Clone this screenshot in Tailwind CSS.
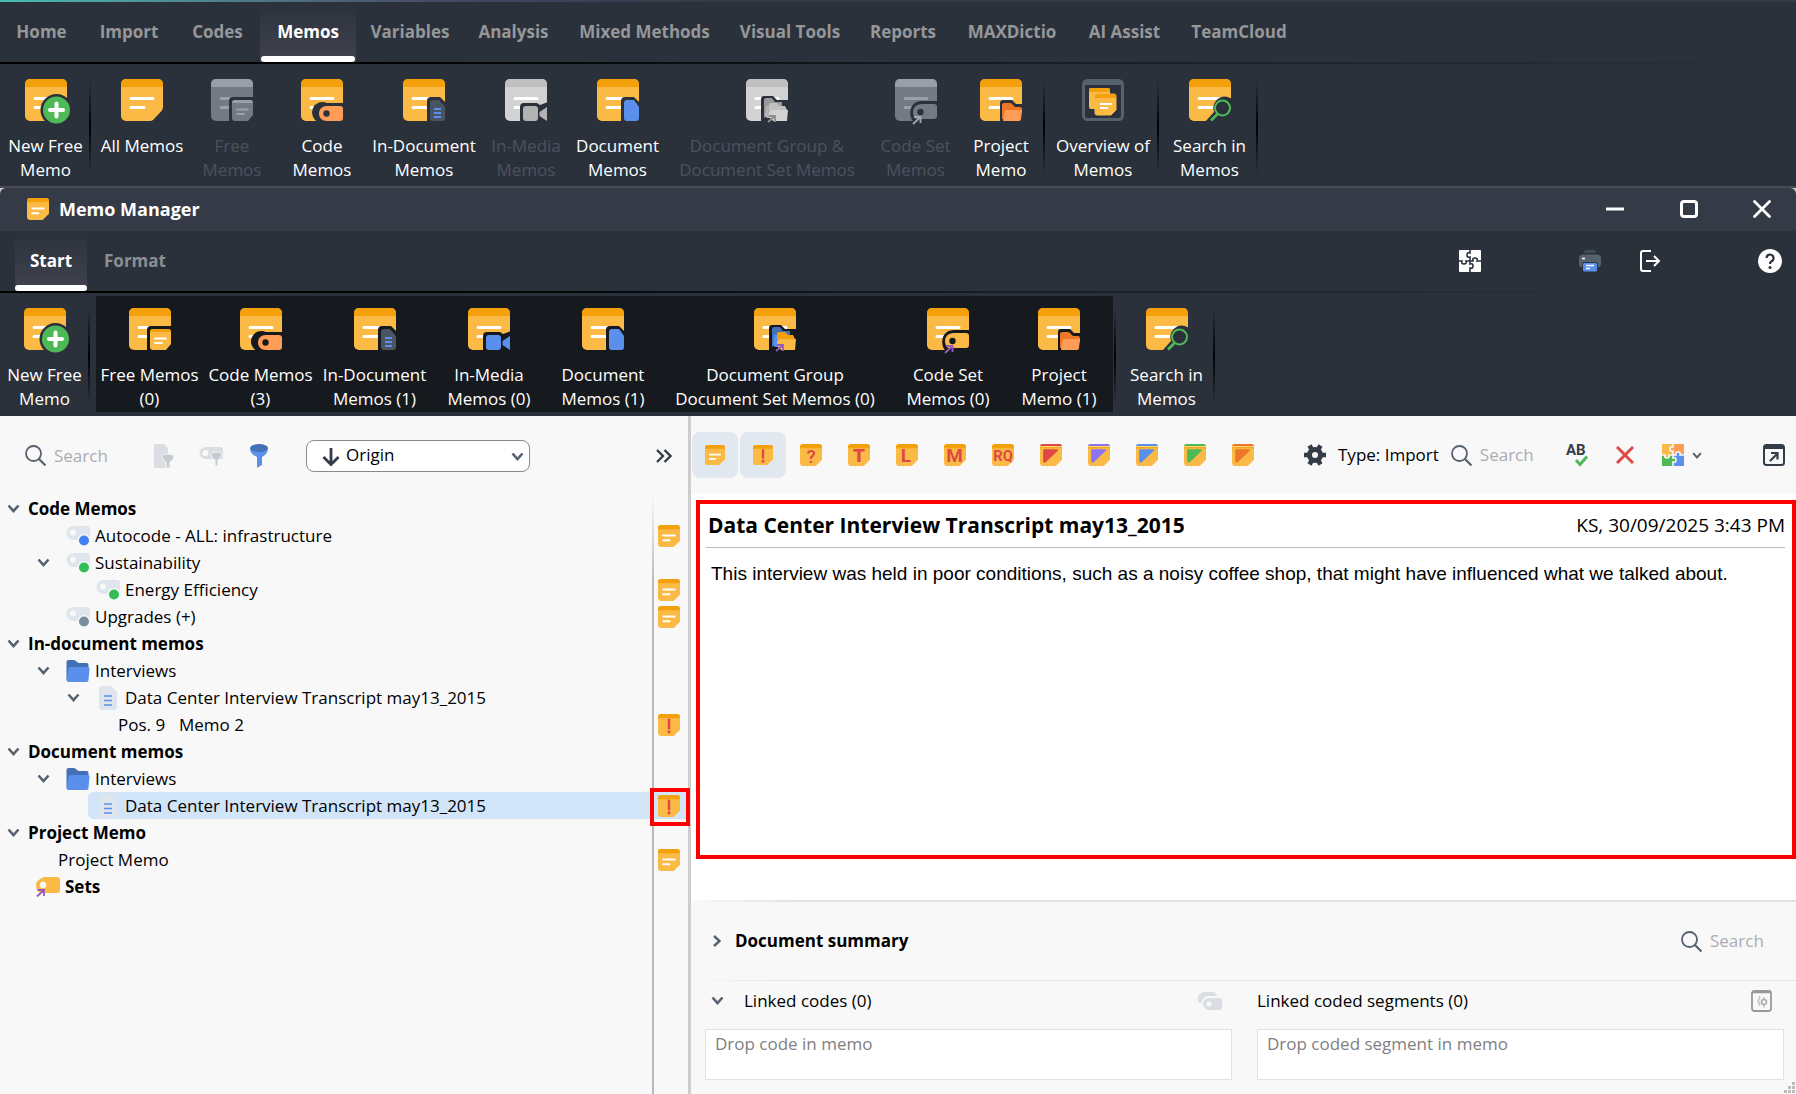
<!DOCTYPE html>
<html lang="en">
<head>
<meta charset="UTF-8">
<meta name="viewport" content="width=device-width, initial-scale=1.0">
<title>Memo Manager</title>
<script src="https://cdn.jsdelivr.net/npm/@tailwindcss/browser@4"></script>
</head>
<body class="min-h-screen flex flex-col bg-[#2b313b] font-['Open_Sans','Noto_Sans',sans-serif] text-[17px] leading-6 text-black">

<!-- Icon library. currentColor is the background that rings the badges. -->
<svg class="hidden" xmlns="http://www.w3.org/2000/svg">
    <symbol id="note" viewBox="0 0 42 42" overflow="visible">
        <rect width="42" height="42" rx="5" fill="#fbba45"/><path d="M5 0h32a5 5 0 0 1 5 5v3H0V5a5 5 0 0 1 5-5z" fill="#f3a00b"/>
        <path d="M10 19.5h22M10 28.500h13" stroke="#fff" stroke-width="3" stroke-linecap="round"/>
    </symbol>
    <symbol id="note-gray" viewBox="0 0 42 42" overflow="visible">
        <rect width="42" height="42" rx="5" fill="#747a84"/><path d="M5 0h32a5 5 0 0 1 5 5v3H0V5a5 5 0 0 1 5-5z" fill="#989fa9"/>
        <path d="M10 19.5h22M10 28.500h13" stroke="#9aa1ab" stroke-width="3" stroke-linecap="round"/>
    </symbol>
    <symbol id="note-light" viewBox="0 0 42 42" overflow="visible">
        <rect width="42" height="42" rx="5" fill="#d2d2d2"/><path d="M5 0h32a5 5 0 0 1 5 5v3H0V5a5 5 0 0 1 5-5z" fill="#c0c0c0"/>
        <path d="M10 19.5h22M10 28.500h13" stroke="#fff" stroke-width="3" stroke-linecap="round"/>
    </symbol>
    <symbol id="i-new" viewBox="0 0 42 42" overflow="visible">
        <use href="#note"/>
        <circle cx="31.500" cy="31" r="16" fill="currentColor"/><circle cx="31.500" cy="31" r="13.500" fill="#4fb957"/>
        <path d="M31.500 24.500v13M25 31h13" stroke="#fff" stroke-width="4" stroke-linecap="round"/>
    </symbol>
    <symbol id="i-all" viewBox="0 0 42 42">
        <path d="M5 0h32a5 5 0 0 1 5 5v23q0 2-1.500 4l-8 8.500q-1.500 1.500-4 1.500H5a5 5 0 0 1-5-5V5a5 5 0 0 1 5-5z" fill="#fbba45"/>
        <path d="M5 0h32a5 5 0 0 1 5 5v3H0V5a5 5 0 0 1 5-5z" fill="#f3a00b"/>
        <path d="M10 19.500h22M10 28.500h13" stroke="#fff" stroke-width="3" stroke-linecap="round"/>
    </symbol>
    <symbol id="i-free" viewBox="0 0 42 42" overflow="visible">
        <use href="#note"/>
        <path d="M18 43V22a4 4 0 0 1 4-4h21v25z" fill="currentColor"/>
        <path d="M21 24a3 3 0 0 1 3-3h15a3 3 0 0 1 3 3v12l-5 6H24a3 3 0 0 1-3-3z" fill="#fbba45"/>
        <path d="M21 24a3 3 0 0 1 3-3h15a3 3 0 0 1 3 3z" fill="#f3a00b"/>
        <path d="M26 30.500h11M26 35h7" stroke="#fff" stroke-width="1.800" stroke-linecap="round"/>
    </symbol>
    <symbol id="i-free-off" viewBox="0 0 42 42" overflow="visible">
        <use href="#note-gray"/>
        <path d="M18 43V22a4 4 0 0 1 4-4h21v25z" fill="currentColor"/>
        <path d="M21 24a3 3 0 0 1 3-3h15a3 3 0 0 1 3 3v12l-5 6H24a3 3 0 0 1-3-3z" fill="#747a84"/>
        <path d="M21 24a3 3 0 0 1 3-3h15a3 3 0 0 1 3 3z" fill="#989fa9"/>
        <path d="M26 30.500h11M26 35h7" stroke="#9aa1ab" stroke-width="1.800" stroke-linecap="round"/>
    </symbol>
    <symbol id="i-code" viewBox="0 0 42 42" overflow="visible">
        <use href="#note"/>
        <path d="M43 24H26a10.500 10.500 0 0 0-9 19h26z" fill="currentColor"/>
        <path d="M39 27H26c-5 0-8 3.500-8 7.500s3 7.500 8 7.500h13a3 3 0 0 0 3-3v-9a3 3 0 0 0-3-3z" fill="#ff9d57"/>
        <circle cx="25.500" cy="34.500" r="3.200" fill="currentColor"/>
    </symbol>
    <symbol id="i-indoc" viewBox="0 0 42 42" overflow="visible">
        <use href="#note"/>
        <path d="M24 43V22a4 4 0 0 1 4-4h9l6 6v19z" fill="currentColor"/>
        <path d="M27 24a3 3 0 0 1 3-3h6l6 7v11a3 3 0 0 1-3 3h-9a3 3 0 0 1-3-3z" fill="#4a5463"/>
        <path d="M31 30h7M31 34h7M31 38h7" stroke="#5a90ec" stroke-width="1.800"/>
    </symbol>
    <symbol id="i-media" viewBox="0 0 42 42" overflow="visible">
        <use href="#note"/>
        <path d="M15 43V28a4 4 0 0 1 4-4h13l3 2 8-3v20z" fill="currentColor"/>
        <rect x="18" y="27" width="15" height="15" rx="3" fill="#5a90ec"/><path d="M34.500 33l7.500-5v14l-7.500-5z" fill="#5a90ec"/>
    </symbol>
    <symbol id="i-media-off" viewBox="0 0 42 42" overflow="visible">
        <use href="#note-light"/>
        <path d="M15 43V28a4 4 0 0 1 4-4h13l3 2 8-3v20z" fill="currentColor"/>
        <rect x="18" y="27" width="15" height="15" rx="3" fill="#b2b2b2"/><path d="M34.500 33l7.500-5v14l-7.500-5z" fill="#b2b2b2"/>
    </symbol>
    <symbol id="i-doc" viewBox="0 0 42 42" overflow="visible">
        <use href="#note"/>
        <path d="M24 43V22a4 4 0 0 1 4-4h9l6 6v19z" fill="currentColor"/>
        <path d="M27 24a3 3 0 0 1 3-3h7l5 7v11a3 3 0 0 1-3 3h-9a3 3 0 0 1-3-3z" fill="#5a90ec"/>
    </symbol>
    <symbol id="i-group" viewBox="0 0 42 42" overflow="visible">
        <use href="#note"/>
        <path d="M15 43V20a3 3 0 0 1 3-3h9l4 4h12v22z" fill="currentColor"/>
        <path d="M18 36V21a2 2 0 0 1 2-2h6l3 4h7v4l-18 12z" fill="#4470b8"/>
        <path d="M20 27h6v12h-5l-2-2z" fill="#5a90ec"/>
        <path d="M23 31v-5a2 2 0 0 1 2-2h6l3 3h5l2 4z" fill="#f3a00b"/>
        <path d="M25 31h17l-1 11H27l-4-4v-5z" fill="#fbba45"/>
        <path d="M22 43l7-6M23 37h6v6" stroke="#965ac0" stroke-width="1.800" fill="none"/>
    </symbol>
    <symbol id="i-group-off" viewBox="0 0 42 42" overflow="visible">
        <use href="#note-light"/>
        <path d="M15 43V20a3 3 0 0 1 3-3h9l4 4h12v22z" fill="currentColor"/>
        <path d="M18 36V21a2 2 0 0 1 2-2h6l3 4h7v4l-18 12z" fill="#999"/>
        <path d="M20 27h6v12h-5l-2-2z" fill="#b2b2b2"/>
        <path d="M23 31v-5a2 2 0 0 1 2-2h6l3 3h5l2 4z" fill="#c0c0c0"/>
        <path d="M25 31h17l-1 11H27l-4-4v-5z" fill="#d2d2d2"/>
        <path d="M22 43l7-6M23 37h6v6" stroke="#8e8e8e" stroke-width="1.800" fill="none"/>
    </symbol>
    <symbol id="i-set" viewBox="0 0 42 42" overflow="visible">
        <use href="#note"/>
        <path d="M43 22H27c-14 0-14 17-8 21h24z" fill="currentColor"/>
        <path d="M39 25H27c-6 0-9 4-9 8 0 3 1 5 3 7h18a3 3 0 0 0 3-3v-9a3 3 0 0 0-3-3z" fill="#fbba45"/>
        <circle cx="25.500" cy="33" r="3.200" fill="currentColor"/>
        <path d="M18 45l7-6.500M19 38h6.500v6" stroke="#965ac0" stroke-width="1.800" fill="none"/>
    </symbol>
    <symbol id="i-set-off" viewBox="0 0 42 42" overflow="visible">
        <use href="#note-gray"/>
        <path d="M43 22H27c-14 0-14 17-8 21h24z" fill="currentColor"/>
        <path d="M39 25H27c-6 0-9 4-9 8 0 3 1 5 3 7h18a3 3 0 0 0 3-3v-9a3 3 0 0 0-3-3z" fill="#747a84"/>
        <circle cx="25.500" cy="33" r="3.200" fill="currentColor"/>
        <path d="M18 45l7-6.500M19 38h6.500v6" stroke="#a0a6af" stroke-width="1.800" fill="none"/>
    </symbol>
    <symbol id="i-project" viewBox="0 0 42 42" overflow="visible">
        <use href="#note"/>
        <path d="M20 43V24a3 3 0 0 1 3-3h9l4 4h7v18z" fill="currentColor"/>
        <path d="M22 40V26a2 2 0 0 1 2-2h7l4 4h5a2 2 0 0 1 2 2v4z" fill="#ee7629"/>
        <path d="M25 31h17l-1 9a2 2 0 0 1-2 2H24a1 1 0 0 1-1-1z" fill="#ff9d57"/>
    </symbol>
    <symbol id="i-overview" viewBox="0 0 42 42">
        <rect x="1.500" y="1.500" width="39" height="39" rx="4" fill="none" stroke="#56616e" stroke-width="3"/><path d="M2 4h38" stroke="#56616e" stroke-width="4"/>
        <path d="M7 11a2 2 0 0 1 2-2h17a2 2 0 0 1 2 2v19H9a2 2 0 0 1-2-2z" fill="#fbba45"/><path d="M7 13v-2a2 2 0 0 1 2-2h17a2 2 0 0 1 2 2v2z" fill="#f3a00b"/>
        <path d="M13 17a2 2 0 0 1 2-2h17a2 2 0 0 1 2 2v14l-5 5H15a2 2 0 0 1-2-2z" fill="#fbba45" stroke="#fbba45"/><path d="M13 19v-2a2 2 0 0 1 2-2h17a2 2 0 0 1 2 2v2z" fill="#f3a00b"/>
        <path d="M18 25h12M18 29h8" stroke="#fff" stroke-width="1.800"/>
    </symbol>
    <symbol id="i-search-memo" viewBox="0 0 42 42" overflow="visible">
        <use href="#note"/>
        <path d="M16 43l9-10a11.500 11.500 0 1 1 18 5v5z" fill="currentColor"/>
        <circle cx="33.500" cy="29" r="7.500" fill="none" stroke="#4fb957" stroke-width="2"/><path d="M28.500 35L22 41.500" stroke="#4fb957" stroke-width="2.600"/>
    </symbol>

    <symbol id="s-base" viewBox="0 0 21 21">
        <path d="M3 0h15a3 3 0 0 1 3 3v12l-6 6H3a3 3 0 0 1-3-3V3a3 3 0 0 1 3-3z" fill="#fbba45"/>
        <path d="M3 0h15a3 3 0 0 1 3 3v1H0V3a3 3 0 0 1 3-3z" fill="#f3a00b"/>
    </symbol>
    <symbol id="s-note" viewBox="0 0 21 21"><use href="#s-base"/><path d="M5 10h11M5 14.500h6" stroke="#fff" stroke-width="1.800" stroke-linecap="round"/></symbol>
    <symbol id="s-bang" viewBox="0 0 21 21"><use href="#s-base"/><path d="M10.500 5.500v8" stroke="#e04848" stroke-width="2.400" stroke-linecap="round"/><circle cx="10.500" cy="17" r="1.500" fill="#e04848"/></symbol>
    <symbol id="s-tri" viewBox="0 0 21 21">
        <use href="#s-base"/><path d="M3 0h15a3 3 0 0 1 3 2H0a3 3 0 0 1 3-2z" fill="currentColor"/><path d="M0 2.500h21" stroke="#ffd98a"/>
        <path d="M4 5h12q2 0 1 1.500L6 17q-3 2-3-1V6q0-1 1-1z" fill="currentColor"/>
    </symbol>
    <symbol id="chev-down" viewBox="0 0 13 9"><path d="M1.500 1.500l5 5.500 5-5.500" fill="none" stroke="currentColor" stroke-width="2.600"/></symbol>
    <symbol id="mag" viewBox="0 0 21 21"><circle cx="8.500" cy="8.500" r="7.500" fill="none" stroke="currentColor" stroke-width="1.800"/><path d="M14 14l6.500 6.500" stroke="currentColor" stroke-width="2.200"/></symbol>
    <symbol id="code-tag" viewBox="0 0 24 22">
        <path d="M8 1h13a3 3 0 0 1 3 3v11H7a7 7 0 0 1 1-14z" fill="#dfe5ed"/><circle cx="7" cy="7.500" r="3" fill="#f8f8f8"/>
        <circle cx="18" cy="15.500" r="6.500" fill="#f8f8f8"/><circle cx="18" cy="15.500" r="5" fill="currentColor"/>
    </symbol>
    <symbol id="folder" viewBox="0 0 23 22">
        <path d="M0 20V2a2 2 0 0 1 2-2h6l4 3h8a2 2 0 0 1 2 2v7z" fill="#4470b8"/><path d="M4 7h17a2 2 0 0 1 2 2l-1 11a2 2 0 0 1-2 2H2a2 2 0 0 1-2-2l2-11a2 2 0 0 1 2-2z" fill="#5a90ec"/>
    </symbol>
    <symbol id="doc" viewBox="0 0 18 24"><path d="M3 0h9l6 6v15a3 3 0 0 1-3 3H3a3 3 0 0 1-3-3V3a3 3 0 0 1 3-3z" fill="#dfe5ed"/><path d="M5 10h8M5 14.500h8M5 19h8" stroke="#5a90ec" stroke-width="1.600"/></symbol>
    <symbol id="puzzle-lines" viewBox="0 0 22 22">
        <path d="M11 0v3q-3-1-3 2t3 2v7q3-1 3 2t-3 2v4M0 11h3q-1 3 2 3t2-3h7q-1-3 2-3t2 3h4" fill="none" stroke="currentColor" stroke-width="1.600"/>
    </symbol>
</svg>

<div class="h-0.5 bg-linear-to-r from-[#45bdb3] via-[#474666] via-25% to-[#343a46] to-40%"></div>

<nav class="flex h-[60px] font-bold text-[#959799]" aria-label="Main menu">
    <button class="w-[83px]">Home</button>
    <button class="w-[92px]">Import</button>
    <button class="w-[85px]">Codes</button>
    <button class="w-24 px-px flex flex-col bg-linear-to-b from-[#2b313b] to-[#41434e] text-white"><span class="grow content-center w-full pt-1.5">Memos</span><span class="h-1.5 w-full rounded-full bg-white"></span></button>
    <button class="w-[108px]">Variables</button>
    <button class="w-[99px]">Analysis</button>
    <button class="w-[163px]">Mixed Methods</button>
    <button class="w-32">Visual Tools</button>
    <button class="w-[98px]">Reports</button>
    <button class="w-[120px]">MAXDictio</button>
    <button class="w-[105px]">AI Assist</button>
    <button class="w-[124px]">TeamCloud</button>
</nav>
<div class="h-0.5 bg-linear-to-r from-black via-[#16181d] to-[#2b313b]"></div>

<section class="flex h-[122px] pl-0.5 pt-[15px] text-white whitespace-nowrap" aria-label="Memos ribbon">
    <button class="w-[87px] flex flex-col items-center gap-[13px]"><svg class="size-[42px] shrink-0 overflow-visible text-[#2b313b]"><use href="#i-new"/></svg><span>New Free<br>Memo</span></button>
    <i class="w-0.5 h-24 mr-1 bg-linear-to-b from-transparent via-black to-transparent"></i>
    <button class="w-[94px] flex flex-col items-center gap-[13px]"><svg class="size-[42px] shrink-0"><use href="#i-all"/></svg><span>All Memos</span></button>
    <button class="w-[86px] flex flex-col items-center gap-[13px] text-[#4b515e]" disabled><svg class="size-[42px] shrink-0 overflow-visible text-[#2b313b]"><use href="#i-free-off"/></svg><span>Free<br>Memos</span></button>
    <button class="w-[94px] flex flex-col items-center gap-[13px]"><svg class="size-[42px] shrink-0 overflow-visible text-[#2b313b]"><use href="#i-code"/></svg><span>Code<br>Memos</span></button>
    <button class="w-[110px] flex flex-col items-center gap-[13px]"><svg class="size-[42px] shrink-0 overflow-visible text-[#2b313b]"><use href="#i-indoc"/></svg><span>In-Document<br>Memos</span></button>
    <button class="w-[94px] flex flex-col items-center gap-[13px] text-[#4b515e]" disabled><svg class="size-[42px] shrink-0 overflow-visible text-[#2b313b]"><use href="#i-media-off"/></svg><span>In-Media<br>Memos</span></button>
    <button class="w-[89px] flex flex-col items-center gap-[13px]"><svg class="size-[42px] shrink-0 overflow-visible text-[#2b313b]"><use href="#i-doc"/></svg><span>Document<br>Memos</span></button>
    <button class="w-[210px] flex flex-col items-center gap-[13px] text-[#4b515e]" disabled><svg class="size-[42px] shrink-0 overflow-visible text-[#2b313b]"><use href="#i-group-off"/></svg><span>Document Group &amp;<br>Document Set Memos</span></button>
    <button class="w-[87px] flex flex-col items-center gap-[13px] text-[#4b515e]" disabled><svg class="size-[42px] shrink-0 overflow-visible text-[#2b313b]"><use href="#i-set-off"/></svg><span>Code Set<br>Memos</span></button>
    <button class="w-[84px] flex flex-col items-center gap-[13px]"><svg class="size-[42px] shrink-0 overflow-visible text-[#2b313b]"><use href="#i-project"/></svg><span>Project<br>Memo</span></button>
    <i class="w-0.5 h-24 mr-1 bg-linear-to-b from-transparent via-black to-transparent"></i>
    <button class="w-[108px] flex flex-col items-center gap-[13px]"><svg class="size-[42px] shrink-0"><use href="#i-overview"/></svg><span>Overview of<br>Memos</span></button>
    <i class="w-0.5 h-24 mr-1 bg-linear-to-b from-transparent via-black to-transparent"></i>
    <button class="w-[93px] flex flex-col items-center gap-[13px]"><svg class="size-[42px] shrink-0 overflow-visible text-[#2b313b]"><use href="#i-search-memo"/></svg><span>Search in<br>Memos</span></button>
    <i class="w-0.5 h-24 bg-linear-to-b from-transparent via-black to-transparent"></i>
</section>

<!-- Memo Manager window -->
<div class="grow flex flex-col border-t-2 border-[#4b4c52] bg-[#c9c9c9]">
    <header class="flex items-center h-[43px] rounded-t-md bg-[#343a46] pl-[27px] pb-0.5 text-white">
        <svg class="size-[22px]"><use href="#s-note"/></svg>
        <h1 class="grow pl-2.5 text-[18px] font-bold">Memo Manager</h1>
        <button class="w-[70px] flex justify-center" aria-label="Minimize"><svg class="size-[18px]" viewBox="0 0 18 18"><path d="M0 9h18" stroke="#fff" stroke-width="3"/></svg></button>
        <button class="w-[78px] flex justify-center" aria-label="Maximize"><svg class="size-[18px]" viewBox="0 0 18 18"><rect x="1.500" y="1.500" width="15" height="15" rx="2.500" fill="none" stroke="#fff" stroke-width="3"/></svg></button>
        <button class="w-[68px] flex justify-center" aria-label="Close"><svg class="size-[18px]" viewBox="0 0 18 18"><path d="M1.500 1.500l15 15M16.500 1.500l-15 15" stroke="#fff" stroke-width="2.800" stroke-linecap="round"/></svg></button>
    </header>

    <div class="bg-[#2b313b]">
        <nav class="flex items-center h-[60px] pl-[15px] pr-3.5 font-bold text-[#8b8e93]">
            <button class="w-[72px] h-full flex flex-col bg-linear-to-b from-[#2b313b] to-[#41434e] text-white"><span class="grow content-center w-full pt-1.5">Start</span><span class="h-1.5 w-full rounded-full bg-white"></span></button>
            <button class="w-24">Format</button>
            <span class="grow"></span>
            <button class="mr-[98px]" aria-label="Add-ons"><svg class="size-[22px] text-[#2b313b]" viewBox="0 0 22 22"><rect width="22" height="22" rx="1" fill="#fff"/><use href="#puzzle-lines"/></svg></button>
            <button class="mr-[38px]" aria-label="Print"><svg class="size-[22px]" viewBox="0 0 22 22"><path d="M5 3q0-3 3-3h6q3 0 3 3z" fill="#414c59"/><rect y="4.500" width="22" height="13" rx="4" fill="#56616e"/><path d="M3 8.500h3" stroke="#fff" stroke-width="1.600"/><rect x="3.500" y="12.500" width="15" height="9.500" rx="2" fill="#5a90ec" stroke="#2b313b"/><path d="M7 15.500h8M7 18.500h4" stroke="#fff" stroke-width="1.300"/></svg></button>
            <button class="mr-[97px]" aria-label="Leave"><svg class="size-[22px]" viewBox="0 0 22 22"><path d="M12 1H4a2 2 0 0 0-2 2v16a2 2 0 0 0 2 2h8M7 11h13M15 6l5 5-5 5" fill="none" stroke="#fff" stroke-width="2"/></svg></button>
            <button aria-label="Help"><svg class="size-6" viewBox="0 0 24 24"><circle cx="12" cy="12" r="12" fill="#fff"/><path d="M8.500 9a3.500 3.500 0 1 1 5 3.200Q12 13 12 15" fill="none" stroke="#2b313b" stroke-width="2.200"/><circle cx="12" cy="18.500" r="1.500" fill="#2b313b"/></svg></button>
        </nav>
        <div class="h-0.5 bg-linear-to-r from-black via-[#16181d] to-[#2b313b] to-90%"></div>

        <section class="flex h-[123px] pt-[3px] pl-px pb-1 text-white whitespace-nowrap" aria-label="Memo Manager ribbon">
            <button class="w-[87px] pt-3 flex flex-col items-center gap-[13px]"><svg class="size-[42px] shrink-0 overflow-visible text-[#2b313b]"><use href="#i-new"/></svg><span>New Free<br>Memo</span></button>
            <i class="w-0.5 h-24 mt-3 mr-1.5 bg-linear-to-b from-transparent via-black to-transparent"></i>
            <div class="flex bg-[#16191e] text-white">
                <button class="w-[107px] flex flex-col items-center gap-[13px] pt-3"><svg class="size-[42px] shrink-0 overflow-visible text-[#16191e]"><use href="#i-free"/></svg><span>Free Memos<br>(0)</span></button>
                <button class="w-[115px] flex flex-col items-center gap-[13px] pt-3"><svg class="size-[42px] shrink-0 overflow-visible text-[#16191e]"><use href="#i-code"/></svg><span>Code Memos<br>(3)</span></button>
                <button class="w-[113px] flex flex-col items-center gap-[13px] pt-3"><svg class="size-[42px] shrink-0 overflow-visible text-[#16191e]"><use href="#i-indoc"/></svg><span>In-Document<br>Memos (1)</span></button>
                <button class="w-[116px] flex flex-col items-center gap-[13px] pt-3"><svg class="size-[42px] shrink-0 overflow-visible text-[#16191e]"><use href="#i-media"/></svg><span>In-Media<br>Memos (0)</span></button>
                <button class="w-[112px] flex flex-col items-center gap-[13px] pt-3"><svg class="size-[42px] shrink-0 overflow-visible text-[#16191e]"><use href="#i-doc"/></svg><span>Document<br>Memos (1)</span></button>
                <button class="w-[232px] flex flex-col items-center gap-[13px] pt-3"><svg class="size-[42px] shrink-0 overflow-visible text-[#16191e]"><use href="#i-group"/></svg><span>Document Group<br>Document Set Memos (0)</span></button>
                <button class="w-[114px] flex flex-col items-center gap-[13px] pt-3"><svg class="size-[42px] shrink-0 overflow-visible text-[#16191e]"><use href="#i-set"/></svg><span>Code Set<br>Memos (0)</span></button>
                <button class="w-[108px] flex flex-col items-center gap-[13px] pt-3"><svg class="size-[42px] shrink-0 overflow-visible text-[#16191e]"><use href="#i-project"/></svg><span>Project<br>Memo (1)</span></button>
            </div>
            <i class="w-0.5 h-24 mt-3 ml-px mr-1 bg-linear-to-b from-transparent via-black to-transparent"></i>
            <button class="w-[93px] pt-3 flex flex-col items-center gap-[13px]"><svg class="size-[42px] shrink-0 overflow-visible text-[#2b313b]"><use href="#i-search-memo"/></svg><span>Search in<br>Memos</span></button>
            <i class="w-0.5 h-24 mt-3 bg-linear-to-b from-transparent via-black to-transparent"></i>
        </section>
    </div>

    <main class="grow flex bg-[#f8f8f8]">
        <!-- Memo tree -->
        <aside class="w-[691px] shrink-0 flex flex-col border-r-[3px] border-[#cdcdcd]">
            <div class="flex items-center h-[79px] pl-[25px] pr-4">
                <svg class="size-[21px] text-[#56616e]"><use href="#mag"/></svg>
                <input type="search" placeholder="Search" aria-label="Search memos" class="w-[90px] ml-2 mr-2.5 bg-transparent placeholder:text-[#a9adb3]">
                <button aria-label="Filter by activated documents" disabled><svg class="h-6 w-5" viewBox="0 0 20 24"><path d="M2 0h8l4 4v20H2a2 2 0 0 1-2-2V2a2 2 0 0 1 2-2z" fill="#dadde2"/><path d="M8 13q0-3 6-3t6 3q-1 4-4 5v6h-4v-6q-3-1-4-5z" fill="#c6cbd2" stroke="#f8f8f8"/></svg></button>
                <button class="ml-[25px]" aria-label="Filter by activated codes" disabled><svg class="h-5 w-[25px]" viewBox="0 0 25 20"><path d="M7 1h14a3 3 0 0 1 3 3v9H7A6.500 6 0 0 1 7 1z" fill="#dadde2"/><circle cx="6.500" cy="7" r="3" fill="#f8f8f8"/><path d="M12 9q0-3 5.500-3T23 9q-1 4-4 5v6h-3v-6q-3-1-4-5z" fill="#c6cbd2" stroke="#f8f8f8"/></svg></button>
                <button class="ml-[26px]" aria-label="Filter"><svg class="h-6 w-[18px]" viewBox="0 0 18 24"><path d="M0 4h18q0 6-6 9v8l-5 3V13Q0 10 0 4z" fill="#5a90ec"/><ellipse cx="9" cy="4" rx="9" ry="4" fill="#4470b8"/></svg></button>
                <label class="relative ml-[38px] block">
                    <span class="sr-only">Sort by</span>
                    <select class="appearance-none h-8 w-[224px] rounded-lg border border-[#8a8a8a] bg-white pl-[39px] pb-0.5"><option>Origin</option></select>
                    <svg class="absolute left-4 top-2 h-[18px] w-[18px] overflow-visible pointer-events-none" viewBox="0 0 18 18"><path d="M9 0v16M1.500 9L9 16.500 16.500 9" fill="none" stroke="#343d47" stroke-width="2.800"/></svg>
                    <svg class="absolute right-1.5 top-3 h-[9px] w-[13px] pointer-events-none text-[#56616e]"><use href="#chev-down"/></svg>
                </label>
                <button class="ml-auto" aria-label="More"><svg class="h-3.5 w-4" viewBox="0 0 16 14"><path d="M1 1l6 6-6 6M8.500 1l6 6-6 6" fill="none" stroke="#343d47" stroke-width="2.400"/></svg></button>
            </div>

            <div class="grow relative">
                <i class="absolute inset-y-0 right-[34px] w-0.5 bg-linear-to-b from-transparent via-[#b4bac1] via-15% to-[#b4bac1]"></i>
                <ul class="leading-[27px] *:flex *:items-center *:h-[27px] *:pr-2">
                    <li class="pl-[7px]"><svg class="w-[13px] h-[9px] mr-2 text-[#56616e]"><use href="#chev-down"/></svg><b>Code Memos</b></li>
                    <li class="pl-[66px]"><svg class="w-6 h-[22px] mr-[5px] text-[#3f80f5]"><use href="#code-tag"/></svg><span class="grow">Autocode - ALL: infrastructure</span><svg class="size-[22px]"><use href="#s-note"/></svg></li>
                    <li class="pl-[37px]"><svg class="w-[13px] h-[9px] mr-4 text-[#56616e]"><use href="#chev-down"/></svg><svg class="w-6 h-[22px] mr-[5px] text-[#34bd57]"><use href="#code-tag"/></svg>Sustainability</li>
                    <li class="pl-24"><svg class="w-6 h-[22px] mr-[5px] text-[#34bd57]"><use href="#code-tag"/></svg><span class="grow">Energy Efficiency</span><svg class="size-[22px]"><use href="#s-note"/></svg></li>
                    <li class="pl-[66px]"><svg class="w-6 h-[22px] mr-[5px] text-[#78909c]"><use href="#code-tag"/></svg><span class="grow">Upgrades (+)</span><svg class="size-[22px]"><use href="#s-note"/></svg></li>
                    <li class="pl-[7px]"><svg class="w-[13px] h-[9px] mr-2 text-[#56616e]"><use href="#chev-down"/></svg><b>In-document memos</b></li>
                    <li class="pl-[37px]"><svg class="w-[13px] h-[9px] mr-4 text-[#56616e]"><use href="#chev-down"/></svg><svg class="w-6 h-[22px] mr-[5px]"><use href="#folder"/></svg>Interviews</li>
                    <li class="pl-[67px]"><svg class="w-[13px] h-[9px] mr-[19px] text-[#56616e]"><use href="#chev-down"/></svg><svg class="w-[18px] h-6 mr-2"><use href="#doc"/></svg>Data Center Interview Transcript may13_2015</li>
                    <li class="pl-[118px]"><span class="w-[61px]">Pos. 9</span><span class="grow">Memo 2</span><svg class="size-[22px]"><use href="#s-bang"/></svg></li>
                    <li class="pl-[7px]"><svg class="w-[13px] h-[9px] mr-2 text-[#56616e]"><use href="#chev-down"/></svg><b>Document memos</b></li>
                    <li class="pl-[37px]"><svg class="w-[13px] h-[9px] mr-4 text-[#56616e]"><use href="#chev-down"/></svg><svg class="w-6 h-[22px] mr-[5px]"><use href="#folder"/></svg>Interviews</li>
                    <li class="relative ml-[88px] pl-[11px] rounded-l-md bg-[#d2e5f8]" aria-selected="true"><svg class="w-[18px] h-6 mr-2"><use href="#doc"/></svg><span class="grow">Data Center Interview Transcript may13_2015</span><svg class="size-[22px]"><use href="#s-bang"/></svg><i class="absolute -right-0.5 -top-1 w-10 h-[38px] border-4 border-[#ff0000]"></i></li>
                    <li class="pl-[7px]"><svg class="w-[13px] h-[9px] mr-2 text-[#56616e]"><use href="#chev-down"/></svg><b>Project Memo</b></li>
                    <li class="pl-[58px]"><span class="grow">Project Memo</span><svg class="size-[22px]"><use href="#s-note"/></svg></li>
                    <li class="pl-9"><svg class="w-6 h-5 mr-[5px]" viewBox="0 0 24 20"><path d="M8 0h13a3 3 0 0 1 3 3v10a3 3 0 0 1-3 3H4Q0 13 0 8t8-8z" fill="#fbba45"/><circle cx="7" cy="8" r="3.200" fill="#f8f8f8"/><path d="M1 19.500l6.500-6M1.500 13H8v6" fill="none" stroke="#965ac0" stroke-width="1.800"/></svg><b>Sets</b></li>
                </ul>
            </div>
        </aside>

        <!-- Selected memo -->
        <section class="grow min-w-0 flex flex-col">
            <div class="flex items-center h-[78px] pl-px pr-[11px]">
                <div class="flex gap-0.5 font-['Roboto',sans-serif]">
                    <button class="size-[46px] rounded-lg flex items-center justify-center bg-[#e2e8f0]" aria-label="Memo"><svg class="size-5" viewBox="0 0 21 21"><use href="#s-note"/></svg></button>
                    <button class="size-[46px] rounded-lg flex items-center justify-center bg-[#e2e8f0]" aria-label="Important"><svg class="size-5" viewBox="0 0 21 21"><use href="#s-bang"/></svg></button>
                    <button class="size-[46px] flex items-center justify-center"><svg class="size-[22px]" viewBox="0 0 21 21"><use href="#s-base"/><text x="10.500" y="18" text-anchor="middle" font-size="18" font-weight="500" fill="#e04848">?</text></svg></button>
                    <button class="size-[46px] flex items-center justify-center"><svg class="size-[22px]" viewBox="0 0 21 21"><use href="#s-base"/><text x="10.500" y="17.500" text-anchor="middle" font-size="18" font-weight="900" fill="#e04848">T</text></svg></button>
                    <button class="size-[46px] flex items-center justify-center"><svg class="size-[22px]" viewBox="0 0 21 21"><use href="#s-base"/><text x="9.500" y="17.500" text-anchor="middle" font-size="18" font-weight="700" fill="#e04848">L</text></svg></button>
                    <button class="size-[46px] flex items-center justify-center"><svg class="size-[22px]" viewBox="0 0 21 21"><use href="#s-base"/><text x="10" y="17.500" text-anchor="middle" font-size="18" font-weight="700" fill="#e04848">M</text></svg></button>
                    <button class="size-[46px] flex items-center justify-center"><svg class="size-[22px]" viewBox="0 0 21 21"><use href="#s-base"/><text x="10.500" y="16.500" text-anchor="middle" font-size="14" font-weight="700" fill="#e04848">RQ</text></svg></button>
                    <button class="size-[46px] flex items-center justify-center text-[#e04848]" aria-label="Red"><svg class="size-[22px]"><use href="#s-tri"/></svg></button>
                    <button class="size-[46px] flex items-center justify-center text-[#8b74f5]" aria-label="Purple"><svg class="size-[22px]"><use href="#s-tri"/></svg></button>
                    <button class="size-[46px] flex items-center justify-center text-[#5a90ec]" aria-label="Blue"><svg class="size-[22px]"><use href="#s-tri"/></svg></button>
                    <button class="size-[46px] flex items-center justify-center text-[#4fb957]" aria-label="Green"><svg class="size-[22px]"><use href="#s-tri"/></svg></button>
                    <button class="size-[46px] flex items-center justify-center text-[#ee7629]" aria-label="Orange"><svg class="size-[22px]"><use href="#s-tri"/></svg></button>
                </div>
                <button class="ml-[38px] flex items-center gap-3 whitespace-nowrap"><svg class="size-[22px]" viewBox="0 0 22 22"><circle cx="11" cy="11" r="5.500" fill="none" stroke="#343d47" stroke-width="5"/><path d="M0 11h4M18 11h4M5.500 1.500l2 3.500M16.500 1.500l-2 3.500M5.500 20.500l2-3.500M16.500 20.500l-2-3.500" stroke="#343d47" stroke-width="4.600"/></svg>Type: Import</button>
                <svg class="size-[21px] shrink-0 ml-3 text-[#56616e]"><use href="#mag"/></svg>
                <input type="search" placeholder="Search" aria-label="Search in memo" class="w-[74px] ml-2 bg-transparent placeholder:text-[#a9adb3]">
                <button class="ml-3 shrink-0" aria-label="Spelling"><svg class="h-[22px] w-[22px] overflow-visible" viewBox="0 0 22 22"><text x="0" y="11" font-size="15" font-weight="700" fill="#343d47" font-family="Roboto">AB</text><path d="M10 16l4 4.500 7-8" fill="none" stroke="#4fb957" stroke-width="3"/></svg></button>
                <button class="ml-7 shrink-0" aria-label="Delete"><svg class="size-[18px]" viewBox="0 0 18 18"><path d="M1 1l16 16M17 1L1 17" stroke="#e04848" stroke-width="3"/></svg></button>
                <button class="ml-7 flex items-center gap-2 shrink-0" aria-label="Add-ons"><svg class="size-[22px] text-[#f8f8f8]" viewBox="0 0 22 22"><path d="M0 0h11v3q-3-1-3 2t3 2v4H7q0 3-2 3t-2-3H0z" fill="#fbba45"/><path d="M11 0h11v11h-4q1-3-2-3t-2 3h-3V7q-3 1-3-2t3-2z" fill="#ff9d57"/><path d="M0 11h3q-1 3 2 3t2-3h4v3q3-1 3 2t-3 2v4H0z" fill="#4fb957"/><path d="M11 11h3q-1-3 2-3t2 3h4v11H11v-4q3 1 3-2t-3-2z" fill="#5a90ec"/><use href="#puzzle-lines"/></svg><svg class="w-2.5 h-[7px] text-[#56616e]"><use href="#chev-down"/></svg></button>
                <button class="ml-auto shrink-0" aria-label="Open in window"><svg class="size-[22px]" viewBox="0 0 22 22"><rect x="1" y="1" width="20" height="20" rx="2.500" fill="none" stroke="#343d47" stroke-width="2"/><path d="M1 3h20" stroke="#343d47" stroke-width="4"/><path d="M7 17l7-7M8 9h6.500v6.500" fill="none" stroke="#343d47" stroke-width="2.200"/></svg></button>
            </div>

            <div class="grow bg-white pt-1.5 pl-[5px] pb-[41px] flex">
                <article class="grow border-4 border-[#ff0000] pl-1.5 pr-[7px]">
                    <header class="flex items-center justify-between h-[44px] border-b border-[#bbb] pl-0.5 pb-0.5">
                        <h2 class="text-[21px] font-bold">Data Center Interview Transcript may13_2015</h2>
                        <time class="text-[19px]">KS, 30/09/2025 3:43 PM</time>
                    </header>
                    <p class="pl-[5px] pt-[14px] font-['Liberation_Sans',sans-serif] text-[19px]">This interview was held in poor conditions, such as a noisy coffee shop, that might have influenced what we talked about.</p>
                </article>
            </div>

            <div class="h-0.5 bg-linear-to-r from-[#f8f8f8] via-[#e2e2e2] via-10% to-[#e2e2e2]"></div>
            <div class="flex items-center h-[78px] pl-[22px] pr-[12px]">
                <button class="flex items-center gap-3.5"><svg class="h-3 w-2" viewBox="0 0 8 12"><path d="M1 1l5.500 5L1 11" fill="none" stroke="#56616e" stroke-width="2.400"/></svg><b>Document summary</b></button>
                <svg class="size-[21px] ml-auto text-[#56616e]"><use href="#mag"/></svg>
                <input type="search" placeholder="Search" aria-label="Search summary" class="w-[74px] ml-2 bg-transparent placeholder:text-[#a9adb3]">
            </div>
            <div class="h-px bg-linear-to-r from-[#f8f8f8] via-[#e2e2e2] via-10% to-[#e2e2e2]"></div>
            <div class="relative grid grid-cols-2 gap-x-[25px] pl-3.5 pr-3 pb-[14px]">
                <div>
                    <div class="flex items-center h-12 pl-1.5 pr-2.5 pb-[9px]">
                        <svg class="w-[13px] h-[9px] mr-5 text-[#56616e]"><use href="#chev-down"/></svg>
                        <label for="codes" class="grow">Linked codes (0)</label>
                        <svg class="w-6 h-[18px]" viewBox="0 0 24 18"><path d="M0 10V6a6 6 0 0 1 6-6h9q3 0 4 4h-8q-6 0-8 7z" fill="#dadde2"/><path d="M11 6h10a3 3 0 0 1 3 3v6a3 3 0 0 1-3 3H11a6 6 0 0 1 0-12z" fill="#dadde2"/><circle cx="11" cy="12" r="2.600" fill="#f8f8f8"/></svg>
                    </div>
                    <textarea id="codes" placeholder="Drop code in memo" class="block w-full h-[51px] resize-none border border-[#e2e2e2] bg-white px-[9px] pt-0.5 placeholder:text-[#808080]"></textarea>
                </div>
                <div>
                    <div class="flex items-center h-12 pr-3 pb-[9px]">
                        <label for="segments" class="grow">Linked coded segments (0)</label>
                        <svg class="w-[21px] h-[22px]" viewBox="0 0 21 22"><rect x="1" y="1" width="19" height="20" rx="2.500" fill="none" stroke="#999" stroke-width="1.800"/><path d="M1 2h19" stroke="#999" stroke-width="2.500"/><path d="M8.500 6v2.500m0 5v2.500M13 7v2.500m0 5v3M8.500 8.500q-2.500 2.500 0 5" fill="none" stroke="#c4c4c4" stroke-width="1.600"/><circle cx="13" cy="12" r="2.500" fill="none" stroke="#aaa" stroke-width="1.600"/></svg>
                    </div>
                    <textarea id="segments" placeholder="Drop coded segment in memo" class="block w-full h-[51px] resize-none border border-[#e2e2e2] bg-white px-[9px] pt-0.5 placeholder:text-[#808080]"></textarea>
                </div>
                <svg class="absolute right-0 bottom-0 size-3" viewBox="0 0 12 12"><path d="M8 0h3v3H8zM8 4h3v3H8zM4 4h3v3H4zM8 8h3v3H8zM4 8h3v3H4zM0 8h3v3H0z" fill="#bbb"/></svg>
            </div>
        </section>
    </main>
</div>
</body>
</html>
